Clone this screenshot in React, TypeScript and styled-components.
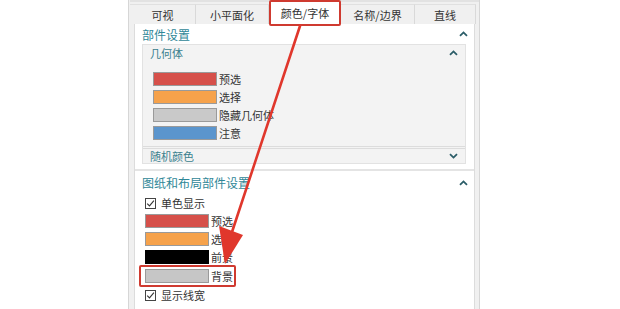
import styled, { createGlobalStyle } from 'styled-components';

const GlobalStyle = createGlobalStyle`
  html, body {
    margin: 0;
    padding: 0;
    background: #ffffff;
  }
  body {
    font-family: "Noto Sans CJK SC", "Noto Sans", sans-serif;
    font-size: 11px;
    color: #333333;
  }
`;

const Page = styled.div`
  position: relative;
  width: 620px;
  height: 309px;
  overflow: hidden;
  padding-left: 128px;
  box-sizing: border-box;
`;

const Frame = styled.div`
  width: 352px;
  height: 309px;
  box-sizing: border-box;
  background: #f0f0f0;
  border-left: 1px solid #d6d6d6;
  border-right: 1px solid #d6d6d6;
  display: flex;
  flex-direction: column;
`;

const TabRow = styled.div`
  display: flex;
  height: 24px;
  margin-left: 1px;
  align-items: flex-end;
  border-top: 2px solid #e2e2e2;
  box-sizing: border-box;
`;

const Tab = styled.div<{ $w: number; $active?: boolean }>`
  width: ${(p) => p.$w}px;
  box-sizing: border-box;
  display: flex;
  align-items: center;
  justify-content: center;
  font-size: 11px;
  color: #333;
  ${(p) =>
    p.$active
      ? `
    height: 26px;
    margin-top: -2px;
    align-self: flex-start;
    background: #ffffff;
    border: 2px solid #cf3a30;
    border-radius: 2px;
    position: relative;
    z-index: 1;
  `
      : `
    height: 20px;
    background: #f0f0f0;
    border-right: 1px solid #d9d9d9;
    border-top: 1px solid #e0e0e0;
  `}
`;

const Panel = styled.div`
  flex: 1;
  margin: 0 4px 0 5px;
  background: #ffffff;
  border-left: 1px solid #dcdcdc;
  border-right: 1px solid #dcdcdc;
  display: flex;
  flex-direction: column;
`;

const Section = styled.div<{ $divided?: boolean }>`
  display: flex;
  flex-direction: column;
  ${(p) => (p.$divided ? 'border-top: 2px solid #e4e4e4; margin-top: 5px;' : '')}
`;

const SectionHeader = styled.div<{ $h: number }>`
  height: ${(p) => p.$h}px;
  display: flex;
  align-items: center;
  justify-content: space-between;
  padding: 0 6px 0 7px;
  font-size: 12px;
  color: #2f8797;
`;

const Group = styled.div`
  margin: 0 8px 0 7px;
  border: 1px solid #e2e2e2;
  background: #f3f3f3;
  display: flex;
  flex-direction: column;
`;

const GroupHeader = styled.div`
  height: 16px;
  display: flex;
  align-items: center;
  justify-content: space-between;
  padding: 0 7px 0 7px;
  font-size: 11px;
  color: #3a7f8e;
`;

const GroupBody = styled.div`
  padding: 9px 0 4px 10px;
  display: flex;
  flex-direction: column;
`;

const GroupFooter = styled.div`
  height: 14px;
  border-top: 3px double #dcdcdc;
  display: flex;
  align-items: center;
  justify-content: space-between;
  padding: 0 7px 0 7px;
  font-size: 11px;
  color: #3a7f8e;
`;

const SwatchRow = styled.div`
  height: 18px;
  display: flex;
  align-items: center;
  gap: 2px;
  font-size: 11px;
  color: #333;
`;

const Swatch = styled.div<{ $c: string }>`
  width: 64px;
  height: 14px;
  box-sizing: border-box;
  background: ${(p) => p.$c};
  border: 1px solid ${(p) => (p.$c === '#000000' ? '#000' : '#9a9a9a')};
`;

const Highlight = styled.div`
  align-self: flex-start;
  margin: -1px 0 -1px -6px;
  padding: 0 1px 0 4px;
  border: 2px solid #cf3a30;
  border-radius: 2px;
`;

const SectionBody = styled.div`
  padding: 0 0 0 10px;
  display: flex;
  flex-direction: column;
`;

const CheckRow = styled.div`
  height: 18px;
  display: flex;
  align-items: center;
  gap: 5px;
  font-size: 11px;
  color: #333;
`;

const Box = styled.div`
  width: 11px;
  height: 11px;
  box-sizing: border-box;
  border: 1px solid #444;
  display: flex;
  align-items: center;
  justify-content: center;
  background: #fff;
`;

const Overlay = styled.svg`
  position: absolute;
  left: 0;
  top: 0;
  pointer-events: none;
  z-index: 5;
`;

function Chevron({ down }: { down?: boolean }) {
  return (
    <svg width='9' height='6' viewBox='0 0 9 6'>
      <path
        d={down ? 'M1 1.2L4.5 4.6L8 1.2' : 'M1 4.8L4.5 1.4L8 4.8'}
        fill='none'
        stroke='#2b5d68'
        strokeWidth='1.8'
      />
    </svg>
  );
}

function Check() {
  return (
    <Box>
      <svg width='9' height='9' viewBox='0 0 9 9'>
        <path d='M1.2 4.6L3.5 6.9L7.9 1.6' fill='none' stroke='#333' strokeWidth='1.1' />
      </svg>
    </Box>
  );
}

const tabs = [
  { label: '可视', w: 66 },
  { label: '小平面化', w: 73 },
  { label: '颜色/字体', w: 72, active: true },
  { label: '名称/边界', w: 74 },
  { label: '直线', w: 61 },
];

const geometry = [
  { c: '#d6504a', label: '预选' },
  { c: '#f6a24b', label: '选择' },
  { c: '#c9c9c9', label: '隐藏几何体' },
  { c: '#5b95cd', label: '注意' },
];

export default function App() {
  return (
    <>
      <GlobalStyle />
      <Page>
        <Frame>
          <TabRow>
            {tabs.map((t) => (
              <Tab key={t.label} $w={t.w} $active={t.active}>
                {t.label}
              </Tab>
            ))}
          </TabRow>
          <Panel>
            <Section>
              <SectionHeader $h={20}>
                <span>部件设置</span>
                <Chevron />
              </SectionHeader>
              <Group>
                <GroupHeader>
                  <span>几何体</span>
                  <Chevron />
                </GroupHeader>
                <GroupBody>
                  {geometry.map((g) => (
                    <SwatchRow key={g.label}>
                      <Swatch $c={g.c} />
                      <span>{g.label}</span>
                    </SwatchRow>
                  ))}
                </GroupBody>
                <GroupFooter>
                  <span>随机颜色</span>
                  <Chevron down />
                </GroupFooter>
              </Group>
            </Section>
            <Section $divided>
              <SectionHeader $h={23}>
                <span>图纸和布局部件设置</span>
                <Chevron />
              </SectionHeader>
              <SectionBody>
                <CheckRow>
                  <Check />
                  <span>单色显示</span>
                </CheckRow>
                <SwatchRow>
                  <Swatch $c='#d6504a' />
                  <span>预选</span>
                </SwatchRow>
                <SwatchRow>
                  <Swatch $c='#f6a24b' />
                  <span>选择</span>
                </SwatchRow>
                <SwatchRow>
                  <Swatch $c='#000000' />
                  <span>前景</span>
                </SwatchRow>
                <Highlight>
                  <SwatchRow>
                    <Swatch $c='#c6c6c6' />
                    <span>背景</span>
                  </SwatchRow>
                </Highlight>
                <CheckRow>
                  <Check />
                  <span>显示线宽</span>
                </CheckRow>
              </SectionBody>
            </Section>
          </Panel>
        </Frame>
        <Overlay width='620' height='309' viewBox='0 0 620 309'>
          <path d='M300 26 L232 232' stroke='#e0372c' strokeWidth='2.6' strokeLinecap='round' />
          <polygon points='225,264 219,226 243,235' fill='#e0372c' />
        </Overlay>
      </Page>
    </>
  );
}
